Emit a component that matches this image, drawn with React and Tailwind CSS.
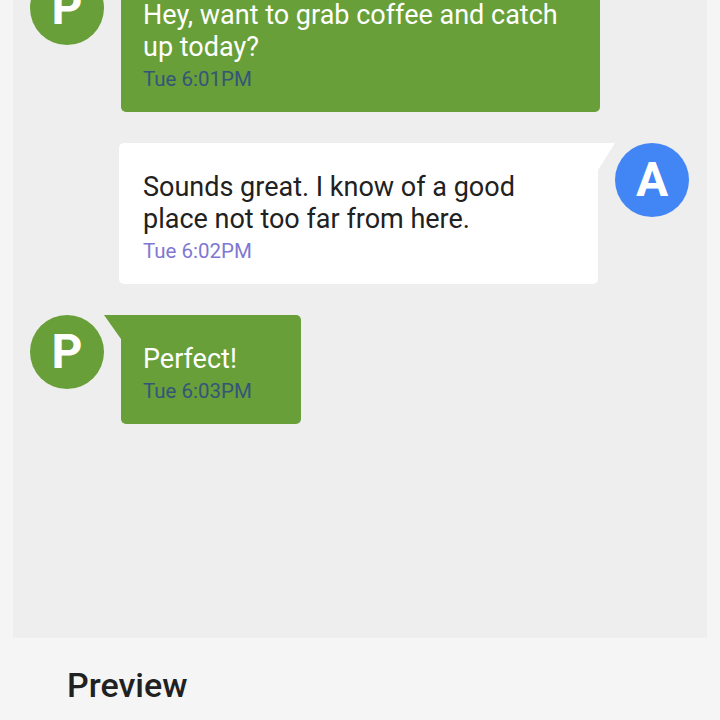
const messages = [
   { id: 1, from: "P", text: "Hey, want to grab coffee and catch up today?", time: "Tue 6:01PM" },
   { id: 2, from: "A", text: "Sounds great. I know of a good place not too far from here.", time: "Tue 6:02PM", mine: true },
   { id: 3, from: "P", text: "Perfect!", time: "Tue 6:03PM" },
];

function Avatar({ letter, mine }) {
   return (
      <div
         className={
            mine
               ? "w-[74px] h-[74px] shrink-0 rounded-full bg-[#4285f4] flex justify-center items-center text-white text-[48px] font-bold leading-none"
               : "w-[74px] h-[74px] shrink-0 rounded-full bg-[#689f38] flex justify-center items-center text-white text-[48px] font-bold leading-none"
         }
      >
         {letter}
      </div>
   );
}

function Bubble({ msg }) {
   if (msg.mine) {
      return (
         <div className="flex justify-end items-start">
            <div className="relative min-w-[180px] max-w-[479px] bg-white rounded-[5px] rounded-tr-none pl-[24px] pr-[20px] pt-[28px] pb-[19px] mr-[17px]">
               <p className="text-[27px] leading-[32px] text-[#212121]">{msg.text}</p>
               <p className="mt-[2px] text-[20.5px] leading-[28px] text-[#7f78d2]">{msg.time}</p>
               <svg className="absolute top-0 right-[-17px]" width="17" height="27" viewBox="0 0 17 27">
                  <polygon points="0,0 17,0 0,27" fill="#ffffff" />
               </svg>
            </div>
            <Avatar letter={msg.from} mine />
         </div>
      );
   }
   return (
      <div className="flex justify-start items-start">
         <Avatar letter={msg.from} />
         <div className="relative min-w-[180px] max-w-[479px] bg-[#689f38] rounded-[5px] rounded-tl-none pl-[22px] pr-[20px] pt-[28px] pb-[19px] ml-[17px]">
            <p className="text-[27px] leading-[32px] text-white">{msg.text}</p>
            <p className="mt-[2px] text-[20.5px] leading-[28px] text-[#34557a]">{msg.time}</p>
            <svg className="absolute top-0 left-[-17px]" width="17" height="24" viewBox="0 0 17 24">
               <polygon points="0,0 17,0 17,24" fill="#689f38" />
            </svg>
         </div>
      </div>
   );
}

export default function App() {
   return (
      <div className="w-[720px] h-[720px] overflow-hidden bg-[#f5f5f5] font-['Roboto',sans-serif]">
         <div className="mx-[13px] mt-[-61px] bg-[#eeeeee] pt-[32px] pl-[17px] pr-[18px] pb-[214px] flex flex-col gap-[31px]">
            {messages.map((msg) => (
               <Bubble key={msg.id} msg={msg} />
            ))}
         </div>
         <div className="pl-[67px] pt-[27px]">
            <h2 className="text-[34px] leading-[40px] font-medium text-[#212121]">Preview</h2>
         </div>
      </div>
   );
}
